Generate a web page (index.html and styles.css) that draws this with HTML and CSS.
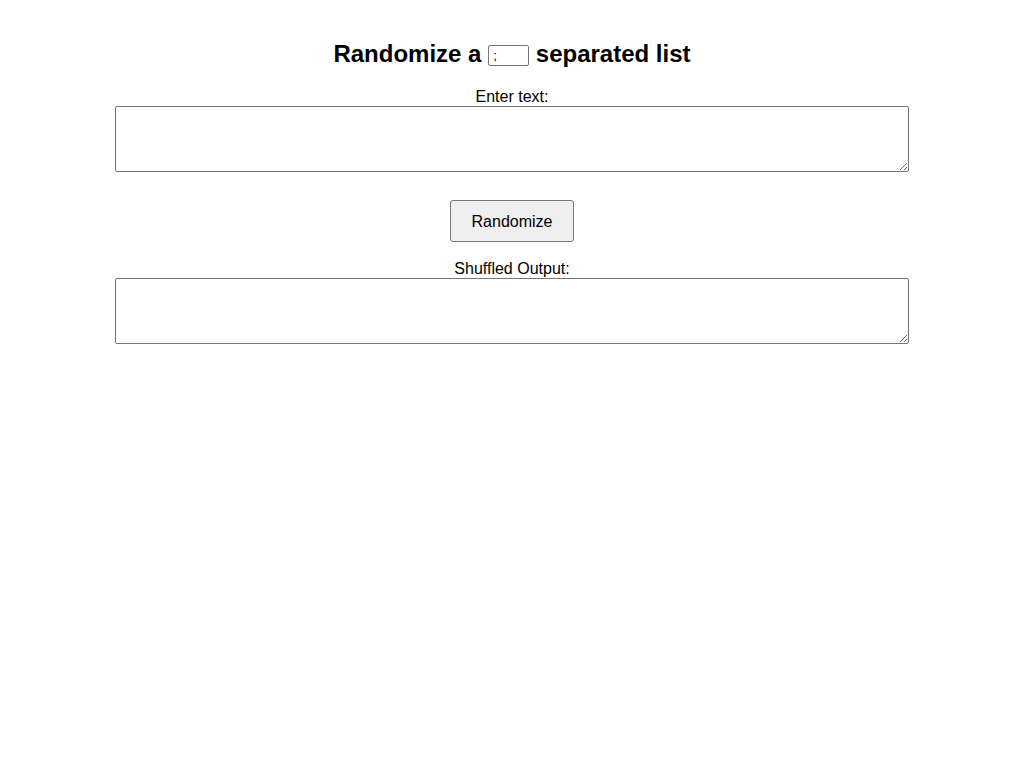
FILE: index.html
```html
<!DOCTYPE html>
<html>
<head>
<meta charset="utf-8">
<title>Randomize a separated list</title>
<link rel="stylesheet" href="styles.css">
</head>
<body>
<main class="page">
  <h1 class="title">Randomize a <input class="sep" type="text" value=";"> separated list</h1>
  <label class="label" for="in">Enter text:</label>
  <textarea id="in" class="box"></textarea>
  <button class="btn" type="button">Randomize</button>
  <label class="label" for="out">Shuffled Output:</label>
  <textarea id="out" class="box"></textarea>
</main>
</body>
</html>
```
FILE: styles.css
```css
html, body {
  margin: 0;
  padding: 0;
  background: #fff;
}
body {
  font-family: "Liberation Sans", Arial, sans-serif;
  font-size: 16px;
  color: #000;
}
.page {
  display: flex;
  flex-direction: column;
  align-items: center;
}
.title {
  font-size: 24px;
  font-weight: bold;
  margin: 40px 0 20px;
  line-height: 28px;
}
.sep {
  box-sizing: border-box;
  width: 41px;
  height: 21px;
  font-family: "Liberation Sans", Arial, sans-serif;
  font-size: 13.33px;
  color: #000;
  padding: 1px 4px;
  border: 1px solid #767676;
  border-radius: 2px;
  vertical-align: 2px;
}
.label {
  line-height: 18px;
}
.box {
  box-sizing: border-box;
  width: 794px;
  height: 66px;
  border: 1px solid #767676;
  border-radius: 2px;
  padding: 2px;
  margin: 0;
}
.btn {
  box-sizing: border-box;
  margin: 28px 0 18px;
  width: 124px;
  height: 42px;
  padding: 2px 0 0;
  font-family: "Liberation Sans", Arial, sans-serif;
  font-size: 16px;
  background: #efefef;
  border: 1px solid #767676;
  border-radius: 3px;
  color: #000;
}
```
